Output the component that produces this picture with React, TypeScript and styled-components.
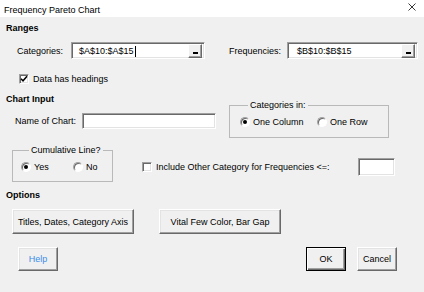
import React from "react";
import styled, { createGlobalStyle } from "styled-components";

const GlobalStyle = createGlobalStyle`
    body {
        margin: 0;
        font-family: "Liberation Sans", Arial, sans-serif;
        font-size: 9px;
        color: #000;
    }
`;

// --- Window frame ---
const Window = styled.div`
    width: 424px;
    height: 292px;
    background-color: #f0f0f0;
    display: flex;
    flex-direction: column;
    overflow: hidden;
`;

const TitleBar = styled.div`
    height: 17px;
    flex-shrink: 0;
    background-color: #fff;
    display: flex;
    align-items: center;
    justify-content: space-between;
    padding: 0 8px 0 4px;
    font-size: 9px;
    line-height: 12px;
    padding-top: 2px;
    box-sizing: border-box;
`;

const CloseIcon = styled.svg`
    width: 8px;
    height: 8px;
    margin-bottom: 6px;
`;

const Body = styled.div`
    flex: 1;
    display: flex;
    flex-direction: column;
    padding: 5px 6px 0 6px;
`;

// --- Generic bits ---
const SectionTitle = styled.div<{ $mt?: number }>`
    font-weight: bold;
    line-height: 12px;
    margin-top: ${({ $mt }) => $mt ?? 0}px;
`;

const Row = styled.div<{ $mt?: number; $pl?: number; $align?: string }>`
    display: flex;
    align-items: ${({ $align }) => $align ?? "center"};
    margin-top: ${({ $mt }) => $mt ?? 0}px;
    padding-left: ${({ $pl }) => $pl ?? 0}px;
`;

const Column = styled.div<{ $width: number }>`
    width: ${({ $width }) => $width}px;
    display: flex;
    flex-direction: column;
`;

const FieldLabel = styled.span<{ $width: number; $ml?: number }>`
    width: ${({ $width }) => $width}px;
    margin-left: ${({ $ml }) => $ml ?? 0}px;
    line-height: 12px;
    flex-shrink: 0;
`;

// Sunken edit box, classic 3D look
const EditBox = styled.div<{ $width: number; $height: number; $ml?: number; $mt?: number }>`
    width: ${({ $width }) => $width}px;
    height: ${({ $height }) => $height}px;
    margin-left: ${({ $ml }) => $ml ?? 0}px;
    margin-top: ${({ $mt }) => $mt ?? 0}px;
    box-sizing: border-box;
    background-color: #fff;
    border: 1px solid;
    border-color: #a0a0a0 #fff #fff #a0a0a0;
    box-shadow: inset 1px 1px 0 #696969, inset -1px -1px 0 #e3e3e3;
    display: flex;
    align-items: center;
    padding: 0 2px 0 7px;
    flex-shrink: 0;
`;

const EditText = styled.span`
    flex: 1;
    display: flex;
    align-items: center;
    line-height: 12px;
    padding-top: 1px;
`;

const Caret = styled.span`
    display: inline-block;
    width: 1px;
    height: 11px;
    background-color: #000;
    margin-left: 1px;
`;

const RefButton = styled.span`
    width: 14px;
    height: 14px;
    box-sizing: border-box;
    background-color: #f0f0f0;
    border: 1px solid;
    border-color: #fff #696969 #696969 #fff;
    box-shadow: inset -1px -1px 0 #a0a0a0;
    display: flex;
    align-items: flex-end;
    justify-content: center;
    padding-bottom: 3px;

    &::after {
        content: "";
        width: 5px;
        height: 2px;
        background-color: #000;
    }
`;

// --- Checkboxes and radios ---
const CheckLabel = styled.label<{ $ml?: number; $mt?: number; $width?: number }>`
    display: flex;
    align-items: center;
    gap: 4px;
    line-height: 12px;
    margin-left: ${({ $ml }) => $ml ?? 0}px;
    margin-top: ${({ $mt }) => $mt ?? 0}px;
    width: ${({ $width }) => ($width ? `${$width}px` : "auto")};
    flex-shrink: 0;
`;

const CheckBox = styled.span`
    width: 10px;
    height: 10px;
    box-sizing: border-box;
    background-color: #fff;
    border: 1px solid;
    border-color: #a0a0a0 #fff #fff #a0a0a0;
    box-shadow: inset 1px 1px 0 #696969, inset -1px -1px 0 #e3e3e3;
    display: flex;
    align-items: center;
    justify-content: center;
`;

const RadioOption = styled.label<{ $width: number }>`
    width: ${({ $width }) => $width}px;
    display: flex;
    align-items: center;
    gap: 3px;
    line-height: 12px;
    flex-shrink: 0;
`;

const RadioDot = styled.span<{ $checked?: boolean }>`
    width: 10px;
    height: 10px;
    box-sizing: border-box;
    border-radius: 50%;
    background-color: #fff;
    border: 1px solid;
    border-color: #a0a0a0 #fff #fff #a0a0a0;
    box-shadow: inset 1px 1px 0 #696969;
    display: flex;
    align-items: center;
    justify-content: center;

    &::after {
        content: "";
        width: 4px;
        height: 4px;
        border-radius: 50%;
        background-color: ${({ $checked }) => ($checked ? "#000" : "transparent")};
    }
`;

// --- Group boxes ---
const GroupBox = styled.fieldset<{ $width: number; $ml?: number; $mt?: number; $pl: number; $pb: number }>`
    width: ${({ $width }) => $width}px;
    margin: ${({ $mt }) => $mt ?? 0}px 0 0 ${({ $ml }) => $ml ?? 0}px;
    padding: 5px 0 ${({ $pb }) => $pb}px ${({ $pl }) => $pl}px;
    box-sizing: border-box;
    border: 1px solid #b9b9b9;
    display: flex;
    flex-shrink: 0;
`;

const GroupLegend = styled.legend`
    padding: 0 2px;
    margin-left: 8px;
    line-height: 12px;
`;

// --- Push buttons ---
const PushButton = styled.button<{ $width: number; $height: number; $ml?: string; $default?: boolean; $link?: boolean }>`
    width: ${({ $width }) => $width}px;
    height: ${({ $height }) => $height}px;
    margin-left: ${({ $ml }) => $ml ?? "0"};
    box-sizing: border-box;
    background-color: #f0f0f0;
    font-family: "Liberation Sans", Arial, sans-serif;
    font-size: 9px;
    color: ${({ $link }) => ($link ? "#3b8ee8" : "#000")};
    padding: 0;
    border: 1px solid;
    border-color: ${({ $default }) => ($default ? "#000" : "#fff #696969 #696969 #fff")};
    box-shadow: ${({ $default }) =>
        $default
            ? "inset 1px 1px 0 #fff, inset -1px -1px 0 #696969, inset -2px -2px 0 #a0a0a0"
            : "inset -1px -1px 0 #a0a0a0, inset 1px 1px 0 #e3e3e3"};
    flex-shrink: 0;
    cursor: default;
`;

const App: React.FC = () => {
    return (
        <>
            <GlobalStyle />
            <Window>
                <TitleBar>
                    <span>Frequency Pareto Chart</span>
                    <CloseIcon viewBox="0 0 8 8">
                        <path d="M0.5 0.5 L7.5 7.5 M7.5 0.5 L0.5 7.5" stroke="#222" strokeWidth="0.9" fill="none" />
                    </CloseIcon>
                </TitleBar>
                <Body>
                    <SectionTitle>Ranges</SectionTitle>
                    <Row $mt={8} $pl={11}>
                        <FieldLabel $width={54}>Categories:</FieldLabel>
                        <EditBox $width={134} $height={17}>
                            <EditText>
                                $A$10:$A$15
                                <Caret />
                            </EditText>
                            <RefButton />
                        </EditBox>
                        <FieldLabel $width={58} $ml={24}>Frequencies:</FieldLabel>
                        <EditBox $width={131} $height={17} style={{ paddingLeft: 9 }}>
                            <EditText>$B$10:$B$15</EditText>
                            <RefButton />
                        </EditBox>
                    </Row>
                    <Row $mt={14} $pl={13}>
                        <CheckLabel>
                            <CheckBox>
                                <svg width="8" height="8" viewBox="0 0 8 8">
                                    <path d="M1 3.8 L3 5.8 L7 1.2" stroke="#000" strokeWidth="1.5" fill="none" />
                                </svg>
                            </CheckBox>
                            Data has headings
                        </CheckLabel>
                    </Row>

                    <Row $mt={8} $align="flex-start">
                        <Column $width={210}>
                            <SectionTitle>Chart Input</SectionTitle>
                            <Row $mt={8} $pl={9}>
                                <FieldLabel $width={67}>Name of Chart:</FieldLabel>
                                <EditBox $width={134} $height={16} />
                            </Row>
                        </Column>
                        <GroupBox $width={160} $ml={13} $mt={6} $pl={10} $pb={9}>
                            <GroupLegend>Categories in:</GroupLegend>
                            <RadioOption $width={77}>
                                <RadioDot $checked />
                                One Column
                            </RadioOption>
                            <RadioOption $width={60}>
                                <RadioDot />
                                One Row
                            </RadioOption>
                        </GroupBox>
                    </Row>

                    <Row $mt={6} $align="flex-start">
                        <GroupBox $width={101} $ml={6} $pl={8} $pb={8}>
                            <GroupLegend>Cumulative Line?</GroupLegend>
                            <RadioOption $width={52}>
                                <RadioDot $checked />
                                Yes
                            </RadioOption>
                            <RadioOption $width={30}>
                                <RadioDot />
                                No
                            </RadioOption>
                        </GroupBox>
                        <CheckLabel $ml={29} $mt={17} $width={216}>
                            <CheckBox />
                            Include Other Category for Frequencies &lt;=:
                        </CheckLabel>
                        <EditBox $width={37} $height={18} $mt={14} />
                    </Row>

                    <SectionTitle $mt={7}>Options</SectionTitle>
                    <Row $mt={8}>
                        <PushButton $width={122} $height={25} $ml="6px">
                            Titles, Dates, Category Axis
                        </PushButton>
                        <PushButton $width={122} $height={25} $ml="25px">
                            Vital Few Color, Bar Gap
                        </PushButton>
                    </Row>
                    <Row $mt={13} style={{ marginRight: 21 }}>
                        <PushButton $width={40} $height={24} $ml="12px" $link>
                            Help
                        </PushButton>
                        <PushButton $width={40} $height={24} $ml="auto" $default>
                            OK
                        </PushButton>
                        <PushButton $width={40} $height={24} $ml="11px">
                            Cancel
                        </PushButton>
                    </Row>
                </Body>
            </Window>
        </>
    );
};

export default App;
